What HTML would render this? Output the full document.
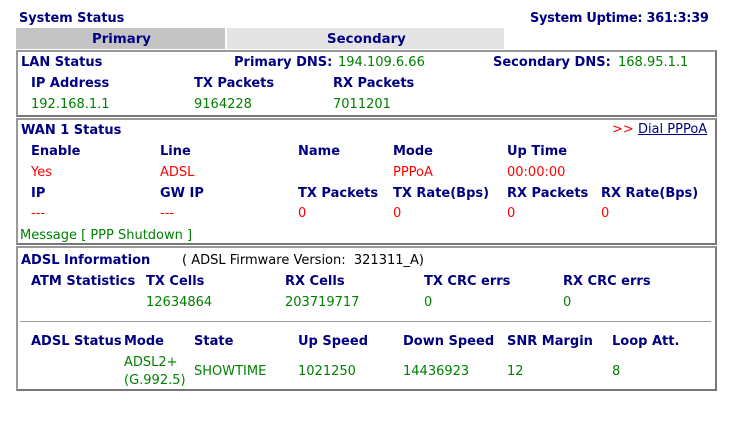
<!DOCTYPE html><html><head><style>
body{margin:0;background:#fff;width:741px;height:432px;position:relative;font-family:"DejaVu Sans","Liberation Sans",sans-serif;font-size:13px;overflow:hidden}
div{position:absolute;white-space:nowrap;line-height:15px}
.b{font-weight:bold;color:#000080;font-size:13px}
.g{color:#008000;font-size:13px}
.r{color:#ff0000;font-size:13px}
.box{border:2px solid #777;border-top-color:#999;border-left-color:#999;box-sizing:border-box}
</style></head><body>
<div class="b" style="left:19px;top:11px;font-size:12.9px">System Status</div>
<div class="b" style="left:530px;top:11px;font-size:12.9px;letter-spacing:-0.25px">System Uptime: 361:3:39</div>
<div style="left:16px;top:28px;width:209px;height:21px;background:#c4c4c4"></div>
<div style="left:227px;top:28px;width:277px;height:21px;background:#e4e4e4"></div>
<div class="b" style="left:92px;top:32px;font-size:13.3px">Primary</div>
<div class="b" style="left:327px;top:32px;font-size:13.3px">Secondary</div>

<div class="box" style="left:16px;top:50px;width:701px;height:67px"></div>
<div class="b" style="left:21px;top:55px">LAN Status</div>
<div class="b" style="left:234px;top:55px">Primary DNS:</div>
<div class="g" style="left:338px;top:55px">194.109.6.66</div>
<div class="b" style="left:493px;top:55px">Secondary DNS:</div>
<div class="g" style="left:618px;top:55px">168.95.1.1</div>
<div class="b" style="left:31px;top:76px">IP Address</div>
<div class="b" style="left:194px;top:76px">TX Packets</div>
<div class="b" style="left:333px;top:76px">RX Packets</div>
<div class="g" style="left:31px;top:97px">192.168.1.1</div>
<div class="g" style="left:194px;top:97px">9164228</div>
<div class="g" style="left:333px;top:97px">7011201</div>

<div class="box" style="left:16px;top:118px;width:701px;height:127px"></div>
<div class="b" style="left:21px;top:123px">WAN 1 Status</div>
<div style="left:612px;top:122px;font-size:13px"><span style="color:#f00">&gt;&gt;</span> <span style="color:#000080;text-decoration:underline">Dial PPPoA</span></div>
<div class="b" style="left:31px;top:144px">Enable</div>
<div class="b" style="left:160px;top:144px">Line</div>
<div class="b" style="left:298px;top:144px">Name</div>
<div class="b" style="left:393px;top:144px">Mode</div>
<div class="b" style="left:507px;top:144px">Up Time</div>
<div class="r" style="left:31px;top:165px">Yes</div>
<div class="r" style="left:160px;top:165px">ADSL</div>
<div class="r" style="left:393px;top:165px">PPPoA</div>
<div class="r" style="left:507px;top:165px">00:00:00</div>
<div class="b" style="left:31px;top:186px">IP</div>
<div class="b" style="left:160px;top:186px">GW IP</div>
<div class="b" style="left:298px;top:186px">TX Packets</div>
<div class="b" style="left:393px;top:186px">TX Rate(Bps)</div>
<div class="b" style="left:507px;top:186px">RX Packets</div>
<div class="b" style="left:601px;top:186px">RX Rate(Bps)</div>
<div class="r" style="left:31px;top:206px">---</div>
<div class="r" style="left:160px;top:206px">---</div>
<div class="r" style="left:298px;top:206px">0</div>
<div class="r" style="left:393px;top:206px">0</div>
<div class="r" style="left:507px;top:206px">0</div>
<div class="r" style="left:601px;top:206px">0</div>
<div class="g" style="left:20px;top:228px">Message [ PPP Shutdown ]</div>

<div class="box" style="left:16px;top:246px;width:701px;height:145px"></div>
<div class="b" style="left:21px;top:253px">ADSL Information</div>
<div style="left:182px;top:253px;font-size:13px">( ADSL Firmware Version: &nbsp;321311_A)</div>
<div class="b" style="left:31px;top:274px">ATM Statistics</div>
<div class="b" style="left:146px;top:274px">TX Cells</div>
<div class="b" style="left:285px;top:274px">RX Cells</div>
<div class="b" style="left:424px;top:274px">TX CRC errs</div>
<div class="b" style="left:563px;top:274px">RX CRC errs</div>
<div class="g" style="left:146px;top:295px">12634864</div>
<div class="g" style="left:285px;top:295px">203719717</div>
<div class="g" style="left:424px;top:295px">0</div>
<div class="g" style="left:563px;top:295px">0</div>
<div style="left:20px;top:321px;width:691px;height:1px;background:#999"></div>
<div class="b" style="left:31px;top:334px">ADSL Status</div>
<div class="b" style="left:124px;top:334px">Mode</div>
<div class="b" style="left:194px;top:334px">State</div>
<div class="b" style="left:298px;top:334px">Up Speed</div>
<div class="b" style="left:403px;top:334px">Down Speed</div>
<div class="b" style="left:507px;top:334px">SNR Margin</div>
<div class="b" style="left:612px;top:334px">Loop Att.</div>
<div class="g" style="left:124px;top:354px;line-height:18px">ADSL2+<br>(G.992.5)</div>
<div class="g" style="left:194px;top:364px">SHOWTIME</div>
<div class="g" style="left:298px;top:364px">1021250</div>
<div class="g" style="left:403px;top:364px">14436923</div>
<div class="g" style="left:507px;top:364px">12</div>
<div class="g" style="left:612px;top:364px">8</div>
</body></html>
